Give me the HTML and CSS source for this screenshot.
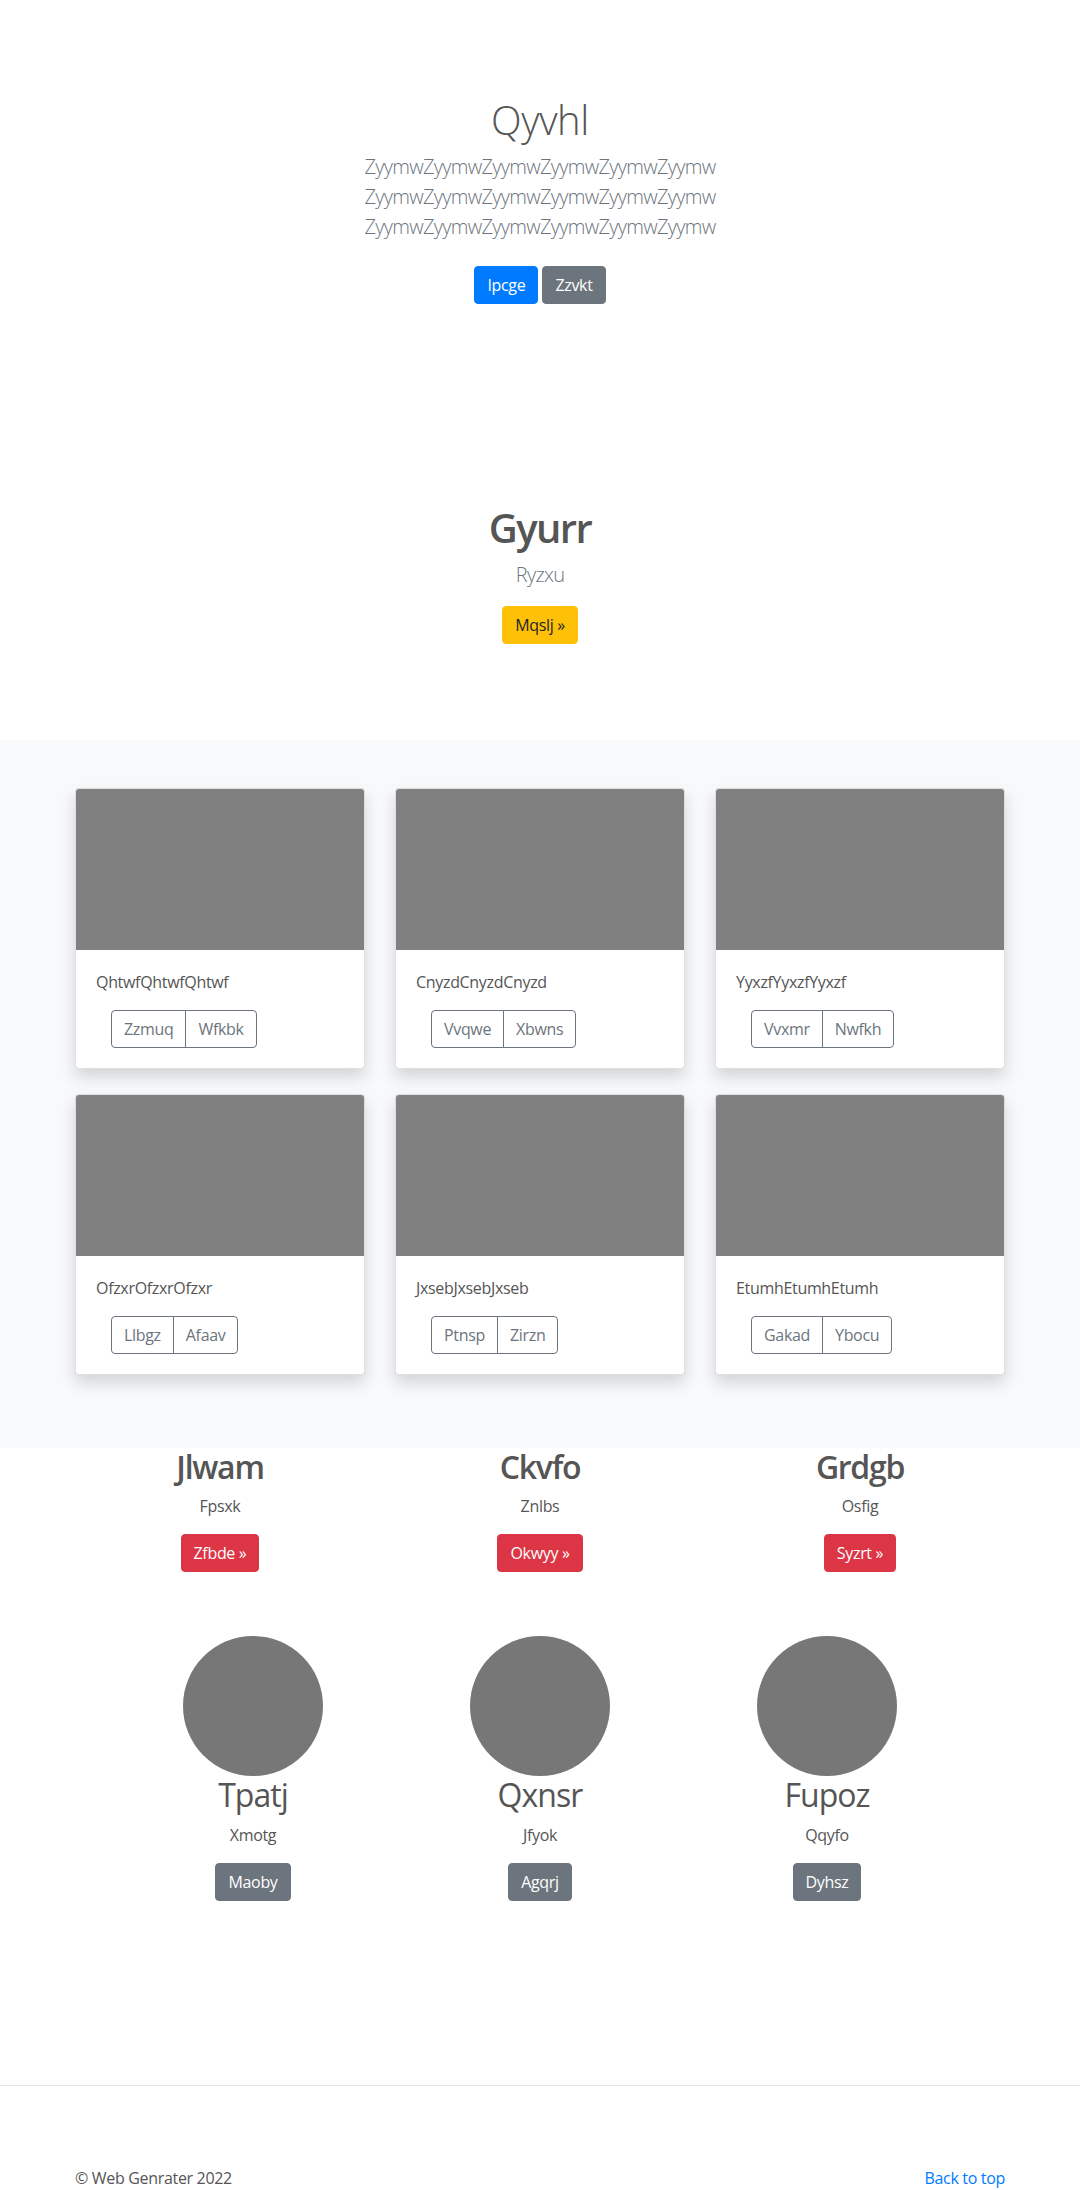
FILE: index.html
```html
<!DOCTYPE html>
<html lang="en">
<head>
<meta charset="utf-8">
<title>Qyvhl</title>
<link rel="stylesheet" href="styles.css">
</head>
<body>
<main>
  <section class="hero">
    <div class="hero-inner">
      <h1 class="title">Qyvhl</h1>
      <p class="lead">ZyymwZyymwZyymwZyymwZyymwZyymw ZyymwZyymwZyymwZyymwZyymwZyymw ZyymwZyymwZyymwZyymwZyymwZyymw</p>
      <p class="hero-actions">
        <a href="#" class="btn btn-primary">Ipcge</a>
        <a href="#" class="btn btn-secondary">Zzvkt</a>
      </p>
    </div>
  </section>

  <section class="feature">
    <div class="hero-inner">
      <h1 class="title title-bold">Gyurr</h1>
      <p class="lead">Ryzxu</p>
      <a href="#" class="btn btn-warning">Mqslj &raquo;</a>
    </div>
  </section>

  <section class="album">
    <div class="container">
      <div class="card-grid">
        <div class="card">
          <div class="card-img"></div>
          <div class="card-body">
            <p class="card-text">QhtwfQhtwfQhtwf</p>
            <div class="btn-group"><a href="#" class="btn btn-outline">Zzmuq</a><a href="#" class="btn btn-outline">Wfkbk</a></div>
          </div>
        </div>
        <div class="card">
          <div class="card-img"></div>
          <div class="card-body">
            <p class="card-text">CnyzdCnyzdCnyzd</p>
            <div class="btn-group"><a href="#" class="btn btn-outline">Vvqwe</a><a href="#" class="btn btn-outline">Xbwns</a></div>
          </div>
        </div>
        <div class="card">
          <div class="card-img"></div>
          <div class="card-body">
            <p class="card-text">YyxzfYyxzfYyxzf</p>
            <div class="btn-group"><a href="#" class="btn btn-outline">Vvxmr</a><a href="#" class="btn btn-outline">Nwfkh</a></div>
          </div>
        </div>
        <div class="card">
          <div class="card-img"></div>
          <div class="card-body">
            <p class="card-text">OfzxrOfzxrOfzxr</p>
            <div class="btn-group"><a href="#" class="btn btn-outline">Llbgz</a><a href="#" class="btn btn-outline">Afaav</a></div>
          </div>
        </div>
        <div class="card">
          <div class="card-img"></div>
          <div class="card-body">
            <p class="card-text">JxsebJxsebJxseb</p>
            <div class="btn-group"><a href="#" class="btn btn-outline">Ptnsp</a><a href="#" class="btn btn-outline">Zirzn</a></div>
          </div>
        </div>
        <div class="card">
          <div class="card-img"></div>
          <div class="card-body">
            <p class="card-text">EtumhEtumhEtumh</p>
            <div class="btn-group"><a href="#" class="btn btn-outline">Gakad</a><a href="#" class="btn btn-outline">Ybocu</a></div>
          </div>
        </div>
      </div>
    </div>
  </section>

  <section class="container columns">
    <div class="col">
      <h2 class="col-title">Jlwam</h2>
      <p class="col-text">Fpsxk</p>
      <p class="col-action"><a href="#" class="btn btn-danger">Zfbde &raquo;</a></p>
    </div>
    <div class="col">
      <h2 class="col-title">Ckvfo</h2>
      <p class="col-text">Znlbs</p>
      <p class="col-action"><a href="#" class="btn btn-danger">Okwyy &raquo;</a></p>
    </div>
    <div class="col">
      <h2 class="col-title">Grdgb</h2>
      <p class="col-text">Osfig</p>
      <p class="col-action"><a href="#" class="btn btn-danger">Syzrt &raquo;</a></p>
    </div>
  </section>

  <section class="marketing">
    <div class="col">
      <svg class="avatar" width="140" height="140" viewBox="0 0 140 140" aria-hidden="true"><circle cx="70" cy="70" r="70" fill="#777"/></svg>
      <h2 class="mk-title">Tpatj</h2>
      <p class="col-text">Xmotg</p>
      <a href="#" class="btn btn-secondary">Maoby</a>
    </div>
    <div class="col">
      <svg class="avatar" width="140" height="140" viewBox="0 0 140 140" aria-hidden="true"><circle cx="70" cy="70" r="70" fill="#777"/></svg>
      <h2 class="mk-title">Qxnsr</h2>
      <p class="col-text">Jfyok</p>
      <a href="#" class="btn btn-secondary">Agqrj</a>
    </div>
    <div class="col">
      <svg class="avatar" width="140" height="140" viewBox="0 0 140 140" aria-hidden="true"><circle cx="70" cy="70" r="70" fill="#777"/></svg>
      <h2 class="mk-title">Fupoz</h2>
      <p class="col-text">Qqyfo</p>
      <a href="#" class="btn btn-secondary">Dyhsz</a>
    </div>
  </section>
</main>

<hr class="divider">

<footer class="footer">
  <div class="container footer-inner">
    <p class="copy">&copy; Web Genrater 2022</p>
    <p class="top-link"><a href="#">Back to top</a></p>
  </div>
</footer>
</body>
</html>
```

FILE: styles.css
```css
* { box-sizing: border-box; }

body {
  margin: 0;
  font-family: "Open Sans", "Noto Sans", "Liberation Sans", sans-serif;
  font-size: 16px;
  line-height: 1.5;
  letter-spacing: -0.02em;
  color: #555;
  background: #fff;
}

a { color: #007bff; text-decoration: none; }

.container {
  width: 960px;
  margin: 0 auto;
  padding: 0 15px;
}

/* hero sections */
.hero,
.feature {
  padding: 96px 0;
  text-align: center;
}

.hero-inner {
  max-width: 640px;
  margin: 0 auto;
  padding: 0 15px;
}

.title {
  margin: 0 0 8px;
  font-size: 40px;
  font-weight: 300;
  line-height: 1.2;
  letter-spacing: -0.01em;
  color: #555;
}

.title-bold {
  font-weight: 600;
  letter-spacing: -0.04em;
}

.lead {
  margin: 0 0 16px;
  font-size: 20px;
  font-weight: 300;
  line-height: 30px;
  letter-spacing: -0.035em;
  color: #6c757d;
}

.hero-actions {
  display: flex;
  justify-content: center;
  gap: 4px;
  margin: 0;
  padding: 8px 0;
}

/* buttons */
.btn {
  display: inline-block;
  padding: 6px 12px;
  font-size: 16px;
  line-height: 24px;
  border: 1px solid transparent;
  border-radius: 4px;
  text-align: center;
  white-space: nowrap;
}

.btn-primary { background: #007bff; border-color: #007bff; color: #fff; }
.btn-secondary { background: #6c757d; border-color: #6c757d; color: #fff; }
.btn-warning { background: #ffc107; border-color: #ffc107; color: #212529; }
.btn-danger { background: #dc3545; border-color: #dc3545; color: #fff; }
.btn-outline { background: transparent; border-color: #6c757d; color: #6c757d; }

/* album */
.album {
  background: #f8f9fa;
  padding: 48px 0 73px;
}

.card-grid {
  display: grid;
  grid-template-columns: repeat(3, 1fr);
  column-gap: 30px;
  row-gap: 25px;
}

.card {
  background: #fff;
  border: 1px solid rgba(0, 0, 0, 0.125);
  border-radius: 4px;
  overflow: hidden;
  box-shadow: 0 8px 16px rgba(0, 0, 0, 0.15);
}

.card-img {
  height: 161px;
  background: #808080;
}

.card-body { padding: 20px; }

.card-text {
  margin: 0 0 16px;
  line-height: 24px;
}

.btn-group {
  display: inline-flex;
  margin-left: 15px;
}

.btn-group .btn:first-child {
  border-top-right-radius: 0;
  border-bottom-right-radius: 0;
}

.btn-group .btn + .btn {
  margin-left: -1px;
  border-top-left-radius: 0;
  border-bottom-left-radius: 0;
}

/* three columns */
.columns {
  display: grid;
  grid-template-columns: repeat(3, 1fr);
  column-gap: 30px;
  text-align: center;
}

.col-title {
  margin: 0 0 8px;
  font-size: 32px;
  font-weight: 600;
  line-height: 1.2;
  letter-spacing: -0.04em;
  color: #555;
}

.col-text {
  margin: 0 0 16px;
  line-height: 24px;
}

.col-action { margin: 0 0 16px; }

/* marketing */
.marketing {
  display: grid;
  grid-template-columns: repeat(3, 1fr);
  width: 861px;
  margin: 0 auto;
  padding: 48px 0 184px;
  text-align: center;
}

.avatar {
  display: block;
  margin: 0 auto;
}

.mk-title {
  margin: 0 0 8px;
  font-size: 32px;
  font-weight: 400;
  line-height: 1.2;
  letter-spacing: -0.03em;
  color: #555;
}

/* footer */
.divider {
  margin: 0;
  border: 0;
  border-top: 1px solid #e5e5e5;
}

.footer {
  padding: 80px 0 48px;
}

.footer-inner {
  display: flex;
  justify-content: space-between;
}

.footer p {
  margin: 0;
  line-height: 24px;
}
```
